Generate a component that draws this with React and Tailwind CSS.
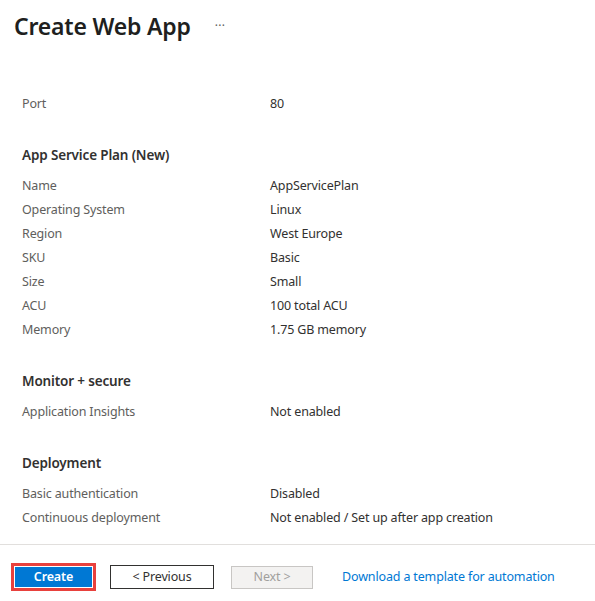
const fontStack = { fontFamily: '"Segoe UI", "Noto Sans", sans-serif' };

function Row({ label, value }) {
  return (
    <div className="flex h-6 items-center text-[12.5px] tracking-[-0.15px]">
      <div className="w-[248px] text-[#605e5c]">{label}</div>
      <div className="text-[#323130]">{value}</div>
    </div>
  );
}

function Section({ title, rows }) {
  return (
    <div className="mt-[27px]">
      <h2 className="h-6 text-[13.5px] font-semibold leading-6 tracking-[-0.15px] text-[#323130]">{title}</h2>
      <div className="mt-[7px]">
        {rows.map((r) => (
          <Row key={r[0]} label={r[0]} value={r[1]} />
        ))}
      </div>
    </div>
  );
}

export default function App() {
  return (
    <div className="flex h-[601px] w-[595px] flex-col bg-white" style={fontStack}>
      <div className="flex h-[52px] items-center pl-[14px]">
        <h1 className="text-[23px] font-semibold tracking-[-0.2px] text-[#201f1e]">Create Web App</h1>
        <span className="ml-[24px] text-[12px] tracking-wide text-[#605e5c]">···</span>
      </div>

      <div className="relative flex-1 overflow-hidden border-b border-[#e1dfdd] pl-[22px]">
        <div className="pt-[40px]">
          <Row label="Port" value="80" />
          <Section
            title="App Service Plan (New)"
            rows={[
              ['Name', 'AppServicePlan'],
              ['Operating System', 'Linux'],
              ['Region', 'West Europe'],
              ['SKU', 'Basic'],
              ['Size', 'Small'],
              ['ACU', '100 total ACU'],
              ['Memory', '1.75 GB memory'],
            ]}
          />
          <Section title="Monitor + secure" rows={[['Application Insights', 'Not enabled']]} />
          <Section
            title="Deployment"
            rows={[
              ['Basic authentication', 'Disabled'],
              ['Continuous deployment', 'Not enabled / Set up after app creation'],
            ]}
          />
        </div>
      </div>

      <div className="flex h-[56px] items-center pl-[11px] pt-[8px] text-[12.5px] tracking-[-0.15px]">
        <div className="border-[3px] border-[#e8413d] p-px">
          <button className="flex h-[20px] w-[77px] items-center justify-center bg-[#0078d4] font-semibold text-white">
            Create
          </button>
        </div>
        <button className="ml-[14px] flex h-[24px] w-[104px] items-center justify-center border border-[#323130] text-[#323130]">
          &lt; Previous
        </button>
        <button className="ml-[17px] flex h-[23px] w-[82px] items-center justify-center border border-[#c8c6c4] bg-[#f3f2f1] text-[#a19f9d]">
          Next &gt;
        </button>
        <a className="ml-[29px] text-[#0078d4]">Download a template for automation</a>
      </div>
    </div>
  );
}
